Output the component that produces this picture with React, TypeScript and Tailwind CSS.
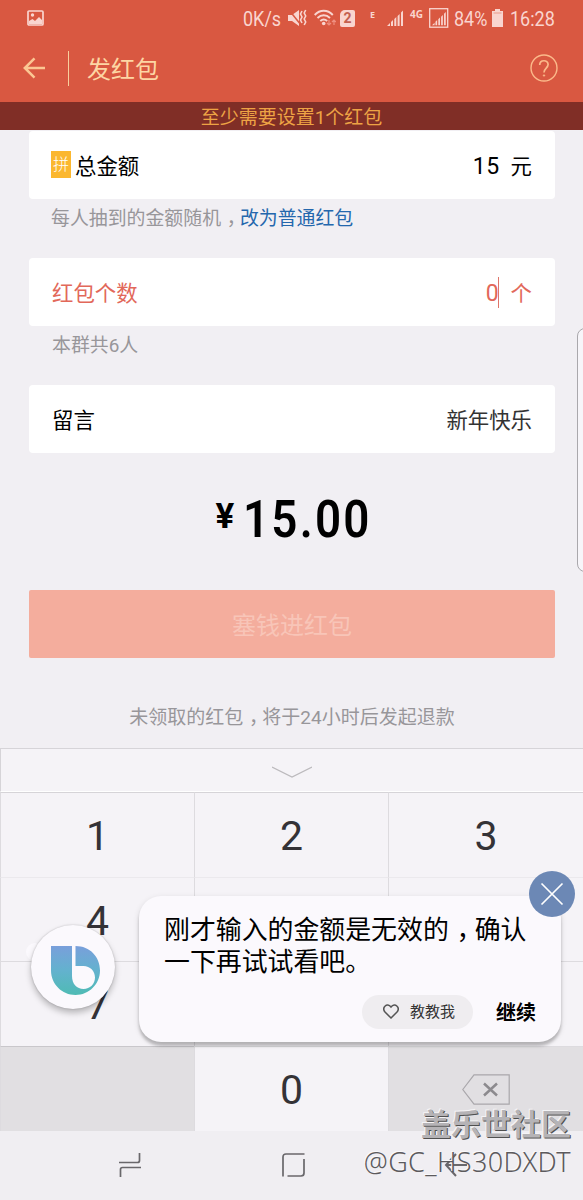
import type { ReactNode } from "react";

const FONT = "font-[Roboto,'Noto_Sans_CJK_SC',sans-serif]";

function Comma() {
  return <span className="inline-block pl-[0.3em] pr-[0.2em] [font-feature-settings:'halt']">，</span>;
}

function SignalBars() {
  return (
    <g fill="#f9d5cf">
      <path d="M0 16l3-3v3zM4 12l2-2v6H4zM7.3 9l2-2v9h-2zM10.600 6l2-2v12h-2zM14 2.500l2-2V16h-2z" />
    </g>
  );
}

function StatusBar() {
  return (
    <div className="flex h-9 items-center pl-[27px] text-[20px] leading-none text-[#f9d5cf]">
      <svg className="h-4 w-[17px]" viewBox="0 0 17 16">
        <rect x="1" y="1" width="15" height="14" rx="1" fill="none" stroke="#f9d5cf" strokeWidth="1.700" />
        <circle cx="5.500" cy="5" r="1.700" fill="#f9d5cf" />
        <path d="M2 14v-3l3.500-2 2.500 2 4-4 3 3v4z" fill="#f9d5cf" />
      </svg>
      <span className="ml-[199px] mt-[2px] w-[39px] origin-left scale-x-90 whitespace-nowrap">0K/s</span>
      <svg className="ml-[6px] h-[18px] w-[19px]" viewBox="0 0 19 18">
        <path d="M0 6h4l7-5v16l-7-5H0z" fill="#f9d5cf" />
        <path d="M1 1l12 15" stroke="#d95841" strokeWidth="1.500" />
        <path d="M14 2l-1.500 3 1.500 3-1.500 3 1.500 3M17.700 1l-1.500 3 1.500 3-1.500 3 1.500 3-1.500 3" fill="none" stroke="#f9d5cf" strokeWidth="1.600" />
      </svg>
      <svg className="ml-[7px] h-[18px] w-[22px]" viewBox="0 0 22 18">
        <g fill="none" stroke="#f9d5cf" strokeWidth="1.900">
          <path d="M.7 6C6 .4 13.500.4 18.800 6M3.500 9c3.700-3.700 8.800-3.700 12.500 0M6.300 12c2.200-2 4.700-2 6.900 0" />
        </g>
        <circle cx="9.700" cy="14.500" r="1.800" fill="#f9d5cf" />
        <path d="M15 11v5m-2-2l2 2 2-2M20 16v-5m-2 2l2-2 2 2" fill="none" stroke="#ef8f80" strokeWidth="1.200" />
      </svg>
      <span className="ml-[4px] flex h-[17px] w-[15px] items-center justify-center rounded-[2px] rounded-tl-[5px] bg-[#f9d5cf] text-[14px] font-bold text-[#c4604f]">
        2
      </span>
      <span className="mb-[8px] ml-[15px] w-[8px] font-['Noto_Sans',sans-serif] text-[9px] font-bold">E</span>
      <svg className="ml-[9px] h-4 w-4" viewBox="0 0 16 16">
        <SignalBars />
      </svg>
      <span className="mb-[8px] ml-[7px] w-[15px] font-['Noto_Sans',sans-serif] text-[10px] font-bold">4G</span>
      <svg className="ml-[4px] h-5 w-5" viewBox="0 0 20 20">
        <rect x=".7" y=".7" width="18" height="18.500" fill="none" stroke="#f9d5cf" strokeWidth="1.300" />
        <g transform="translate(3 3.500) scale(.86)">
          <SignalBars />
        </g>
      </svg>
      <span className="ml-[5px] mt-[2px] w-[34px] origin-left scale-x-90 whitespace-nowrap">84%</span>
      <svg className="ml-[4px] h-[18px] w-[11px]" viewBox="0 0 11 18">
        <path d="M3 0h5v2h3v16H0V2h3z" fill="#f9d5cf" />
        <path d="M1.500 4h8" stroke="#e99a8b" strokeWidth="1" />
      </svg>
      <span className="ml-[7px] mt-[2px] origin-left scale-x-90 whitespace-nowrap">16:28</span>
    </div>
  );
}

function Header() {
  return (
    <header className="h-[102px] bg-[#d95841]">
      <StatusBar />
      <div className="flex h-16 items-center pl-[23px] pr-[25px] text-[#fdd6a4]">
        <svg className="h-6 w-[22px]" viewBox="0 0 22 24" fill="none" stroke="#fbc793" strokeWidth="2.500">
          <path d="M22 12H2M11.500 2.300L1.800 12l9.700 9.700" />
        </svg>
        <div className="ml-[23px] h-[35px] w-px bg-[#f8cf9e]" />
        <h1 className="ml-[18px] pt-1 text-[24px] leading-8">发红包</h1>
        <svg className="ml-auto h-7 w-7" viewBox="0 0 28 28" fill="none" stroke="#fbb98a">
          <circle cx="14" cy="14" r="13" strokeWidth="1.400" />
          <path d="M9.700 11c0-5.600 8.400-5.600 8.400-.4 0 3.400-4.100 3.800-4.100 8" strokeWidth="1.700" />
          <circle cx="14" cy="21.500" r=".7" fill="#fbb98a" />
        </svg>
      </div>
    </header>
  );
}

function Row({ label, children, className }: { label: ReactNode; children: ReactNode; className: string }) {
  return (
    <div className={`flex h-[68px] items-center justify-between rounded-[4px] bg-white px-[23px] pt-[3px] text-[21.400px] leading-8 ${className}`}>
      <div className="flex items-center">{label}</div>
      <div className="flex items-center">{children}</div>
    </div>
  );
}

function Form() {
  return (
    <main className="h-[618px] px-[29px] pr-[28px] pt-px">
      <Row
        className="text-black"
        label={
          <>
            <span className="-ml-px mb-[4px] mr-[4px] flex h-[27px] w-5 items-center justify-center bg-[#fbb72f] text-[16px] font-light text-white">拼</span>
            总金额
          </>
        }
      >
        <span className="mr-[11px] text-[23px] tracking-[0.5px]">15</span>元
      </Row>
      <p className="h-[59px] pl-[22px] pt-[6px] text-[18.900px] leading-7 text-[#98969a]">
        每人抽到的金额随机
        <Comma />
        <span className="text-[#2467ad]">改为普通红包</span>
      </p>
      <Row className="text-[#e2685a]" label="红包个数">
        <span className="text-[23px]">0</span>
        <span className="-ml-px mb-[3px] mr-[12px] h-[31px] w-px bg-[#df7569]" />个
      </Row>
      <p className="h-[59px] pl-[23px] pt-[6px] text-[18.900px] leading-7 text-[#98969a]">本群共6人</p>
      <Row className="text-black" label="留言">
        <span className="text-[#333]">新年快乐</span>
      </Row>
      <div className="mt-[32px] flex h-[70px] items-start justify-center pr-[4px] leading-none text-black">
        <span className="mr-[7px] mt-[14px] w-[20px] text-[35px] font-bold">¥</span>
        <span className="mt-[9px] w-[122px] origin-left scale-x-[0.880] whitespace-nowrap text-[52px] font-semibold tracking-[2.500px]">15.00</span>
      </div>
      <button className="mt-[35px] block h-[68px] w-full rounded-[2px] bg-[#f4ad9d] pt-[4px] text-[24px] text-[#f8c5b8]">塞钱进红包</button>
      <p className="mt-[46px] text-center text-[19px] leading-7 text-[#98969a]">
        未领取的红包
        <Comma />
        将于24小时后发起退款
      </p>
    </main>
  );
}

function Key({ children, className = "" }: { children?: ReactNode; className?: string }) {
  return (
    <div className={`flex items-center justify-center border-l border-t border-[#dddbdf] pt-[3px] text-[41px] leading-none text-[#343236] ${className}`}>
      {children}
    </div>
  );
}

function Keypad() {
  return (
    <section className="h-[383px] border-t border-[#d6d4d8] bg-[#f5f3f7]">
      <div className="flex h-[43px] items-center justify-center border-b border-l border-b-white border-l-[#d6d4d8]">
        <svg className="mt-[3px] h-3 w-10" viewBox="0 0 40 12" fill="none" stroke="#bbb9bd" strokeWidth="1.200">
          <path d="M0 1l20 10L40 1" />
        </svg>
      </div>
      <div className="grid h-[339px] grid-cols-[194px_194px_195px] grid-rows-[85px_84px_85px_85px]">
        <Key className="border-t-[#d6d4d8]">1</Key>
        <Key className="border-t-[#d6d4d8]">2</Key>
        <Key className="border-t-[#d6d4d8]">3</Key>
        <Key className="border-t-[#ebe9ed]">4</Key>
        <Key className="border-t-[#ebe9ed]" />
        <Key className="border-t-[#ebe9ed]" />
        <Key>7</Key>
        <Key />
        <Key />
        <Key className="border-t-[#c9c7cb] bg-[#e1dfe2]" />
        <Key>0</Key>
        <Key className="bg-[#e1dfe2]">
          <svg className="-mt-[3px] h-[31px] w-12" viewBox="0 0 48 31" fill="none">
            <path d="M.8 15.500L12 .8h35.200v29.400H12z" stroke="#a9a7ab" strokeWidth="1.200" />
            <path d="M22 9.500l13 12m0-12l-13 12" stroke="#8c8a8e" strokeWidth="2.500" />
          </svg>
        </Key>
      </div>
    </section>
  );
}

function NavBar() {
  return (
    <nav className="flex h-[69px] items-center bg-[#f0eef2] pb-[2px] pl-[118px]">
      <svg className="h-[26px] w-6" viewBox="0 0 24 26" fill="none" stroke="#69676b" strokeWidth="1.700">
        <path d="M1 10.500h18.500q2 0 2-2V1M23 15.500H4.500q-2 0-2 2V25" />
      </svg>
      <svg className="ml-[139px] h-6 w-6" viewBox="0 0 24 24" fill="none" stroke="#69676b" strokeWidth="1.700">
        <path d="M2 23.500V4q0-3 3-3h18.500M6.500 23H20q3 0 3-3V6" />
      </svg>
      <svg className="ml-[139px] h-6 w-6" viewBox="0 0 24 24" fill="none" stroke="#69676b" strokeWidth="2">
        <path d="M23 12H2M12 1L2 12l10 11" />
      </svg>
    </nav>
  );
}

function AssistantDialog() {
  return (
    <div className="absolute left-[139px] top-[896px] h-[146px] w-[422px] rounded-[22px] bg-[#fbf9fd] px-[25px] pt-[18px] shadow-[0_4px_3px_rgba(0,0,0,0.2),0_2px_6px_rgba(0,0,0,0.12)]">
      <p className="whitespace-nowrap text-[25.900px] leading-8 text-black">
        刚才输入的金额是无效的
        <Comma />
        确认
        <br />
        一下再试试看吧。
      </p>
      <div className="mt-[16px] flex items-center justify-end">
        <button className="flex h-[34px] w-[111px] items-center justify-center gap-[11px] rounded-full bg-[#efedf0] pl-[3px] pt-[2px] text-[15px] text-[#333]">
          <svg className="mb-[2px] h-[15px] w-4" viewBox="0 0 16 15" fill="none" stroke="#555" strokeWidth="1.500">
            <path d="M8 14L2 8C-1.500 3.500 4-2 8 3c4-5 9.500.5 6 5z" />
          </svg>
          教教我
        </button>
        <button className="ml-[23px] pt-[3px] text-[20px] font-bold leading-8 text-black">继续</button>
      </div>
      <button className="absolute -right-[14px] -top-[25px] flex h-[46px] w-[46px] items-center justify-center rounded-full bg-[#6c88b5]">
        <svg className="h-6 w-6" viewBox="0 0 24 24" fill="none" stroke="#fff" strokeWidth="1.700">
          <path d="M1.500 1.500l21 21M22.500 1.500l-21 21" />
        </svg>
      </button>
    </div>
  );
}

function AssistantButton() {
  return (
    <>
      <div className="absolute left-[26px] top-[943px] h-[18px] w-[18px] rounded-full bg-[#fbf9fd]" />
      <div className="absolute left-[31px] top-[925px] flex h-[84px] w-[84px] items-center justify-center rounded-full bg-[#fbf9fd] shadow-[0_4px_6px_rgba(0,0,0,0.25),0_0_2px_rgba(0,0,0,0.2)]">
        <svg className="ml-[5px] mt-[7px] h-[49px] w-[49px]" viewBox="0 0 49 49">
          <defs>
            <linearGradient id="assistant" x1="0" y1="0" x2="0" y2="1">
              <stop offset="0" stopColor="#799fdb" />
              <stop offset=".5" stopColor="#63b2ce" />
              <stop offset="1" stopColor="#4fbbb4" />
            </linearGradient>
          </defs>
          <path
            d="M0 0H21V30C21 38 26 43 32.500 43C39 43 44 38 44 31.500C44 25 39 20 32.500 20H24.500V0C39 0 49 11 49 24.500C49 38 38 49 24.500 49C11 49 0 38 0 24.500Z"
            fill="url(#assistant)"
          />
        </svg>
      </div>
    </>
  );
}

function Watermark() {
  return (
    <div className="pointer-events-none absolute right-[12px] top-[1105px] text-right font-['Noto_Sans','Noto_Sans_CJK_SC',sans-serif] leading-none">
      <div className="text-[30px] font-bold leading-[38px] text-[#b5b3b6] [text-shadow:1px_1px_0_#505050,-1px_-1px_0_#f5f4f6]">盖乐世社区</div>
      <div className="whitespace-nowrap text-[27px] font-light leading-[38px] tracking-[0.350px] text-[#5c5a5d] [text-shadow:-1px_-1px_0_#faf9fb]">@GC_HS30DXDT</div>
    </div>
  );
}

export default function App() {
  return (
    <div className={`relative h-[1200px] w-[583px] overflow-hidden bg-[#f1eff3] ${FONT}`}>
      <Header />
      <div className="flex h-7 items-center justify-center bg-[#802e26] pt-[3px] text-[19px] leading-7 text-[#eda345]">至少需要设置1个红包</div>
      <Form />
      <Keypad />
      <NavBar />
      <div className="absolute -right-[6px] top-[328px] h-[244px] w-3 rounded-l-[8px] border border-[#aaa8ac] bg-[#f7f5f9]" />
      <AssistantDialog />
      <AssistantButton />
      <Watermark />
    </div>
  );
}
